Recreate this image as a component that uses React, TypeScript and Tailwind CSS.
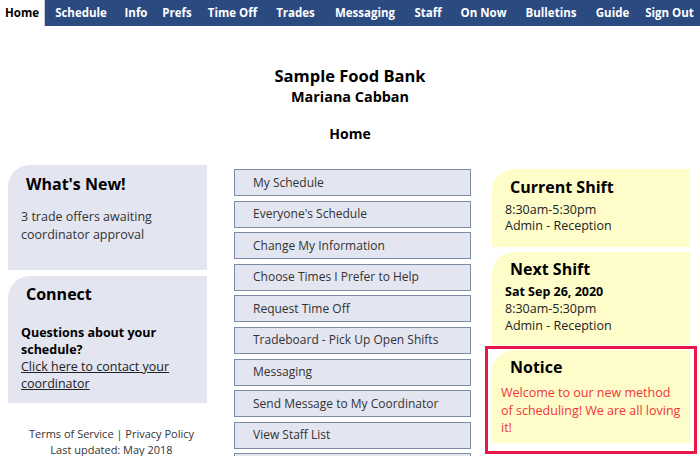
import React from "react";

const nav = [
  { t: "Schedule", w: "w-[72px]" },
  { t: "Info", w: "w-[38px]" },
  { t: "Prefs", w: "w-[44px]" },
  { t: "Time Off", w: "w-[67px]" },
  { t: "Trades", w: "w-[59px]" },
  { t: "Messaging", w: "w-[80px]" },
  { t: "Staff", w: "w-[46px]" },
  { t: "On Now", w: "w-[65px]" },
  { t: "Bulletins", w: "w-[70px]" },
  { t: "Guide", w: "w-[53px]" },
  { t: "Sign Out", w: "w-[61px]" },
];

const buttons = [
  "My Schedule",
  "Everyone's Schedule",
  "Change My Information",
  "Choose Times I Prefer to Help",
  "Request Time Off",
  "Tradeboard - Pick Up Open Shifts",
  "Messaging",
  "Send Message to My Coordinator",
  "View Staff List",
  "",
];

export default function App() {
  return (
    <div
      className="w-[700px] h-[456px] overflow-hidden bg-white text-[#222]"
      style={{ fontFamily: '"Open Sans", "Noto Sans", sans-serif' }}
    >
      <div className="flex h-[26px] bg-[#2b4a80] text-white text-[11.5px] font-bold">
        <div className="w-[45px] shrink-0 bg-white text-black flex items-center justify-center border-r border-[#c8ccd6]">
          Home
        </div>
        {nav.map((n) => (
          <div key={n.t} className={`${n.w} shrink-0 flex items-center justify-center`}>
            {n.t}
          </div>
        ))}
      </div>

      <div className="text-center text-black font-bold pt-[39px]">
        <div className="text-[16.5px] leading-[22px]">Sample Food Bank</div>
        <div className="text-[14.4px] leading-[20px]">Mariana Cabban</div>
        <div className="text-[14px] leading-[20px] mt-[17px]">Home</div>
      </div>

      <div className="flex pl-[8px] mt-[21px]">
        <div className="w-[199px] shrink-0 flex flex-col">
          <div className="h-[105px] bg-[#e3e5f1] rounded-tl-[22px] pt-[8px]">
            <div className="pl-[18px] text-[16px] font-bold text-black leading-[22px]">What's New!</div>
            <div className="pl-[13px] mt-[13px] text-[12.5px] leading-[18px] text-[#333]">
              3 trade offers awaiting
              <br />
              coordinator approval
            </div>
          </div>
          <div className="h-[127px] mt-[6px] bg-[#e3e5f1] rounded-tl-[22px] pt-[7px]">
            <div className="pl-[18px] text-[16px] font-bold text-black leading-[22px]">Connect</div>
            <div className="pl-[13px] mt-[19px] text-[12.5px] leading-[17px] text-[#222]">
              <div className="font-bold text-black">
                Questions about your
                <br />
                schedule?
              </div>
              <div className="underline">
                Click here to contact your
                <br />
                coordinator
              </div>
            </div>
          </div>
          <div className="mt-[23px] text-center text-[11px] leading-[16px] text-[#333] pl-[8px]">
            Terms of Service | Privacy Policy
            <br />
            Last updated: May 2018
          </div>
        </div>

        <div className="w-[237px] shrink-0 ml-[27px] mt-[4px] flex flex-col gap-[4.6px]">
          {buttons.map((b, i) => (
            <div
              key={i}
              className="h-[27px] shrink-0 bg-[#e3e5f1] border border-[#7d8ca5] pl-[18px] flex items-center text-[12px] text-[#333]"
            >
              {b}
            </div>
          ))}
        </div>

        <div className="w-[212px] shrink-0 ml-[14px] mt-[4px] flex flex-col">
          <div className="ml-[7px] w-[198px] h-[78px] bg-[#fefdc9] rounded-tl-[22px] pt-[7px]">
            <div className="pl-[18px] text-[16px] font-bold text-black leading-[22px]">Current Shift</div>
            <div className="pl-[13px] mt-[4px] text-[12.5px] leading-[16px] text-[#222]">
              8:30am-5:30pm
              <br />
              Admin - Reception
            </div>
          </div>
          <div className="ml-[7px] w-[198px] h-[93px] mt-[5px] bg-[#fefdc9] rounded-tl-[22px] pt-[6px]">
            <div className="pl-[18px] text-[16px] font-bold text-black leading-[22px]">Next Shift</div>
            <div className="pl-[13px] mt-[3px] text-[12.5px] leading-[17px] text-[#222]">
              <div className="font-bold text-black">Sat Sep 26, 2020</div>
              8:30am-5:30pm
              <br />
              Admin - Reception
            </div>
          </div>
          <div className="w-[212px] h-[108px] mt-[1px] border-[3px] border-[#e8174a] pt-[1px] pl-[4px]">
            <div className="w-[198px] h-[93px] bg-[#fefdc9] rounded-tl-[22px] pt-[6px]">
              <div className="pl-[18px] text-[16px] font-bold text-black leading-[22px]">Notice</div>
              <div className="pl-[9px] pr-[7px] mt-[6px] text-[12.5px] leading-[17.5px] text-[#f0343c]">
                Welcome to our new method of scheduling! We are all loving it!
              </div>
            </div>
          </div>
        </div>
      </div>
    </div>
  );
}
